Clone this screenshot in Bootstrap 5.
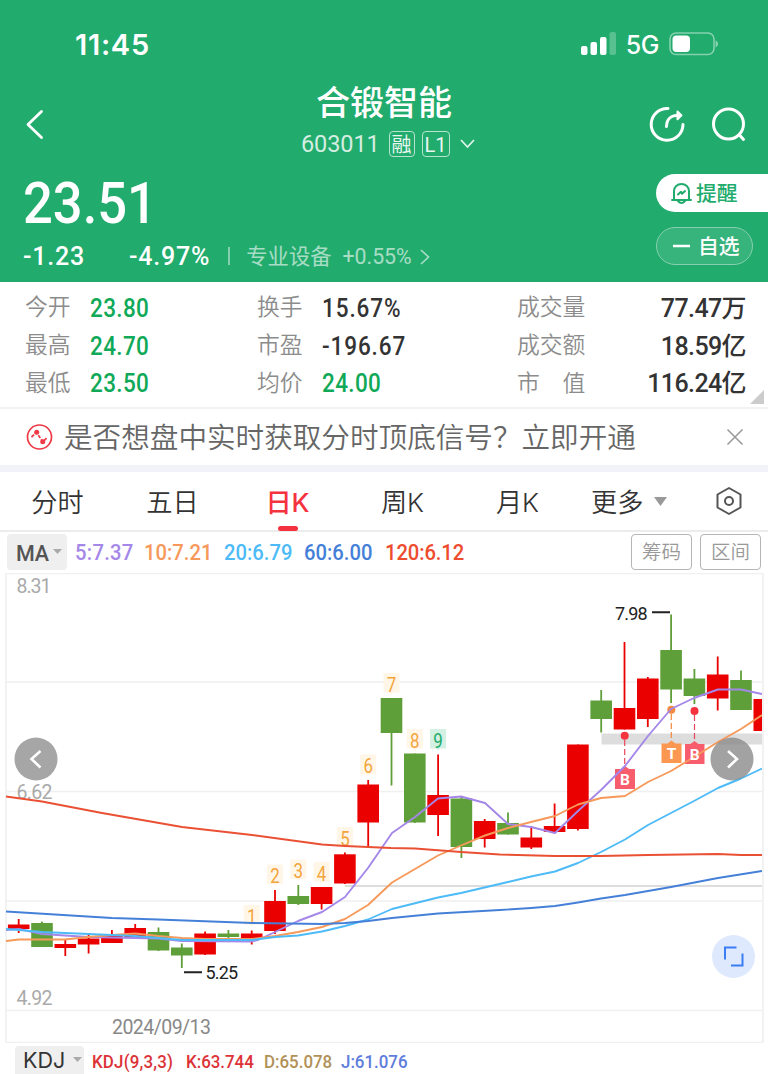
<!DOCTYPE html>
<html lang="zh-CN">
<head>
<meta charset="utf-8">
<meta name="viewport" content="width=device-width, initial-scale=1">
<title>合锻智能 603011</title>
<link rel="stylesheet" href="https://cdn.jsdelivr.net/npm/bootstrap@5.3.0/dist/css/bootstrap.min.css">
<style>
  body { font-family: Roboto, "Noto Sans CJK SC", sans-serif; line-height: 1; background: #fff; color: #333; overflow-x: hidden; white-space: nowrap; }
  svg { display: block; flex: none; }
  .quote-head { background: #21ab6d; color: #fff; height: 282px; }
  .status-bar { height: 88px; padding: 0 49px 0 75px; font-family: Inter, sans-serif; }
  .clock { font-size: 29px; font-weight: 600; letter-spacing: .7px; }
  .net { font-size: 25px; font-weight: 500; letter-spacing: -.5px; margin: 2px 10px 0 9px; }
  .title-row { height: 78px; grid-template-columns: 150px 1fr 150px; }
  .stock-name { font-size: 34px; font-weight: 500; height: 32px; line-height: 30px; }
  .code { font-size: 24.5px; letter-spacing: -.1px; opacity: .8; width: 78px; margin-right: 10px; transform: scaleX(.96); transform-origin: left; }
  .tag-box { border: 1px solid rgba(255,255,255,.75); border-radius: 4px; height: 26px; line-height: 26px; text-align: center; font-size: 20px; opacity: .9; }
  .price { font-size: 58px; font-weight: 500; height: 58px; line-height: 58px; transform: scaleX(.905); transform-origin: left; }
  .chg { font-size: 25px; font-weight: 500; letter-spacing: .8px; }
  .sector { font-size: 21.3px; opacity: .6; }
  .alert-pill { width: 112px; height: 38px; border-radius: 19px 0 0 19px; background: #fff; color: #21ab6d; font-size: 20.8px; font-weight: 500; padding-left: 15px; }
  .fav-pill { width: 97px; height: 38px; border-radius: 19px; background: #37b37c; border: 1px solid #86d0af; font-size: 20.8px; font-weight: 500; padding-left: 16px; }
  .alert-pill span, .fav-pill span { padding-top: 2px; }
  .stats { height: 127px; padding: 6px 22px 0 25px; border-bottom: 2px solid #f2f2f2; position: relative; }
  .stat-line { height: 37.7px; }
  .stat-line .lab { color: #8c8c8c; font-size: 22.8px; font-weight: 350; width: 65px; padding-top: 4px; }
  .stat-line .lab-r { width: 100px; margin-left: auto; }
  .stat-line .val { font-size: 25px; font-weight: 500; letter-spacing: -.6px; padding-top: 3px; }
  .stat-line .din { letter-spacing: .4px; transform: scaleX(.9); transform-origin: left; }
  .stat-line .wide { letter-spacing: 1px; }
  .c1 { width: 167px; }
  .c3 { width: 129px; }
  .up { color: #0fa958; }
  .corner { position: absolute; right: 4px; bottom: 3px; }
  .promo { height: 56px; padding: 0 24px 0 26px; color: #666; font-size: 28.6px; font-weight: 350; }
  .promo span { padding-top: 2px; margin-left: 11px; }
  .strip { height: 7px; background: #f2f3f8; }
  .tabs-row { height: 60px; border-bottom: 2px solid #ececec; font-family: Inter, "Noto Sans CJK SC", sans-serif; font-size: 26.2px; color: #333; font-weight: 350; }
  .tab-item { width: 115px; height: 58px; text-align: center; line-height: 61px; position: relative; }
  .tab-item.on { color: #f5333f; font-weight: 500; }
  .tab-item.on::after { content: ""; position: absolute; left: 48px; bottom: -1px; width: 20px; height: 5px; border-radius: 3px; background: #f5333f; }
  .ma-row { height: 41px; padding: 2px 7px 0 7px; font-size: 21.5px; font-weight: 500; }
  .ma-vals { height: 38px; }
  .ma-vals span { transform: scaleX(.94); transform-origin: left; }
  .sel { background: #efefef; border-radius: 4px; }
  .ma-sel { width: 60px; height: 36px; color: #555; padding-left: 9px; letter-spacing: -.3px; }
  .out-btn { width: 61px; height: 36px; border: 1px solid #b5b5b5; border-radius: 4px; color: #999; font-size: 19.5px; font-weight: 350; padding-top: 1px; }
  .kdj-row { height: 31px; padding: 3px 0 0 15px; font-size: 17.8px; font-weight: 500; overflow: hidden; }
  .kdj-row span { transform: scaleX(.95); transform-origin: left; }
  .kdj-sel { width: 69px; height: 32px; padding: 0 0 5px 8px; font: 400 21.5px Inter, sans-serif; color: #333; }
  .chart text { font-family: Roboto, sans-serif; }
</style>
</head>
<body>
<header class="quote-head">
  <div class="status-bar d-flex align-items-center">
    <span class="clock me-auto">11:45</span>
    <svg width="36" height="24" viewBox="0 0 36 24" fill="#fff"><rect x="0" y="14" width="6.5" height="9" rx="2"/><rect x="9.5" y="10" width="6.5" height="13" rx="2"/><rect x="19" y="5" width="6.5" height="18" rx="2"/><rect x="28.5" y="0" width="6.5" height="23" rx="2" opacity=".25"/></svg>
    <span class="net">5G</span>
    <svg width="50" height="24" viewBox="0 0 50 24"><rect x="1" y="1" width="44" height="21.5" rx="6" fill="none" stroke="#fff" stroke-opacity=".45" stroke-width="1.6"/><rect x="3.5" y="3.5" width="17.5" height="16.5" rx="4" fill="#fff"/><path d="M46.6 8.2q2.4 1 2.4 3.6t-2.4 3.6z" fill="#fff" opacity=".5"/></svg>
  </div>
  <div class="title-row d-grid">
    <svg class="ms-4" width="24" height="72" viewBox="0 0 24 72" fill="none" stroke="#fff" stroke-width="2.8" stroke-linecap="round" stroke-linejoin="round"><path d="M17.5 23.5 4 36.5 17.5 49.5"/></svg>
    <div class="d-flex flex-column align-items-center">
      <div class="stock-name mb-2">合锻智能</div>
      <div class="d-flex align-items-center ps-2" style="height:26px;margin-top:3px">
        <span class="code">603011</span>
        <span class="tag-box" style="width:26px;margin-right:7px">融</span>
        <span class="tag-box" style="width:28px">L1</span>
        <svg class="ms-2" width="18" height="14" viewBox="0 0 18 14" fill="none" stroke="#fff" stroke-width="1.8" stroke-opacity=".85"><path d="m3 3 6.5 7L16 3"/></svg>
      </div>
    </div>
    <svg width="150" height="72" viewBox="618 88 150 72" fill="none" stroke="#fff" stroke-width="3" stroke-linecap="round" stroke-linejoin="round"><path d="M668 108.500A15.900 15.900 0 1 0 683 124.500M666.500 126.500c.2-7.500 3.600-11.200 13-11.200"/><path d="M677.500 111.500l4 3.900-4 3.900z" fill="#fff" stroke-width="2"/><circle cx="728.500" cy="124" r="15"/><path d="m739.500 135 4 4.500"/></svg>
  </div>
  <div class="d-flex justify-content-between">
    <div style="padding:8px 0 0 23px">
      <div class="price">23.51</div>
      <div class="d-flex align-items-center" style="height:49px">
        <span class="chg" style="width:106px">-1.23</span>
        <span class="chg">-4.97%</span>
        <svg class="sector" style="margin:0 16px 0 18px" width="2" height="20"><path d="M1 0v18" stroke="#fff" stroke-width="1.5"/></svg>
        <span class="sector">专业设备</span>
        <span class="sector" style="margin-left:11px">+0.55%</span>
        <svg class="sector" style="margin-left:7px" width="12" height="20" fill="none" stroke="#fff" stroke-width="1.700"><path d="m2 3 7.500 7L2 17"/></svg>
      </div>
    </div>
    <div class="pt-2">
      <div class="alert-pill d-flex align-items-center">
        <svg class="me-1" width="21" height="24" viewBox="0 0 21 24" fill="none" stroke="#21ab6d" stroke-width="2" stroke-linecap="round" stroke-linejoin="round"><path d="M1 19h19M3 19v-9a7.500 7 0 0 1 15 0v9M7 20q3.500 4 7 0M7 13.500l3-2.700 1 2 3-2.700"/></svg>
        <span>提醒</span>
      </div>
      <div class="fav-pill d-flex align-items-center" style="margin-top:15px">
        <svg width="25" height="4"><path d="M0 2h17" stroke="#fff" stroke-width="2.500"/></svg><span>自选</span>
      </div>
    </div>
  </div>
</header>

<section class="stats">
  <div class="d-flex align-items-center stat-line"><span class="lab">今开</span><span class="val din up c1 me-0">23.80</span><span class="lab">换手</span><span class="val din wide">15.67%</span><span class="lab lab-r">成交量</span><span class="val text-end c3">77.47万</span></div>
  <div class="d-flex align-items-center stat-line"><span class="lab">最高</span><span class="val din up c1 me-0">24.70</span><span class="lab">市盈</span><span class="val din wide">-196.67</span><span class="lab lab-r">成交额</span><span class="val text-end c3">18.59亿</span></div>
  <div class="d-flex align-items-center stat-line"><span class="lab">最低</span><span class="val din up c1 me-0">23.50</span><span class="lab">均价</span><span class="val din up">24.00</span><span class="lab lab-r">市　值</span><span class="val text-end c3">116.24亿</span></div>
  <svg class="corner" width="14" height="14"><path d="M14 0v14H0z" fill="#ccc"/></svg>
</section>

<section class="promo d-flex align-items-center">
  <svg width="27" height="27" viewBox="0 0 27 27" fill="none" stroke="#ee3a46" stroke-width="1.700"><circle cx="13.500" cy="13" r="12"/><path d="M5.500 13 10.500 8.500l6.500 9.500 4.500-5" stroke-dasharray="3.500 1.500"/><g fill="#ee3a46" stroke="none"><circle cx="10.700" cy="8.200" r="2.500"/><circle cx="16.700" cy="17.800" r="2.500"/></g></svg>
  <span>是否想盘中实时获取分时顶底信号？立即开通</span>
  <svg class="ms-auto" width="18" height="18" stroke="#999" stroke-width="1.500"><path d="m1.500 1.500 15 15m0-15-15 15"/></svg>
</section>
<div class="strip"></div>

<nav class="tabs-row d-flex align-items-center">
  <div class="tab-item">分时</div><div class="tab-item">五日</div><div class="tab-item on">日K</div><div class="tab-item">周K</div><div class="tab-item">月K</div>
  <span class="ms-3 pt-1">更多</span>
  <svg style="margin-left:11px" width="13" height="9"><path d="M0 0h13L6.500 9z" fill="#999"/></svg>
  <svg style="margin-left:47px" width="30" height="30" viewBox="0 0 30 30" fill="none" stroke="#555" stroke-width="2" stroke-linejoin="round"><path d="M15 2 26.500 8.500v13L15 28 3.500 21.500v-13z"/><circle cx="15" cy="15" r="4"/></svg>
</nav>

<section class="ma-row d-flex">
  <div class="ma-sel sel d-flex align-items-center pt-1">MA<svg class="ms-1 mb-1" width="9" height="6"><path d="M0 0h9L4.500 5z" fill="#aaa"/></svg></div>
  <div class="ma-vals d-flex align-items-center">
    <span style="color:#a487e8;width:69px;margin-left:7.500px;letter-spacing:.3px">5:7.37</span>
    <span style="color:#f6995b;width:80px">10:7.21</span>
    <span style="color:#4dbbf8;width:80px">20:6.79</span>
    <span style="color:#4580d8;width:81px">60:6.00</span>
    <span style="color:#ee4c2f;letter-spacing:-.1px">120:6.12</span>
  </div>
  <div class="out-btn ms-auto me-2 d-flex align-items-center justify-content-center">筹码</div>
  <div class="out-btn d-flex align-items-center justify-content-center">区间</div>
</section>

<svg class="chart" id="chart" width="768" height="470" viewBox="0 573 768 470">
  <defs><clipPath id="plot"><rect x="6" y="573" width="756" height="470"/></clipPath></defs>
  <path d="M6 573.500H762M6 682H762M6 791.500H762M6 901H762M6 1010.500H762M6 1042.500H762" stroke="#f0f0f0" stroke-width="1.500"/>
  <path d="M6 573V1043M763 573V1043" stroke="#f2f2f2" stroke-width="2"/>
  <g fill="#aaa" font-size="19.500"><text x="16.500" y="593" textLength="35">8.31</text><text x="16.500" y="799" textLength="36">6.62</text><text x="16.500" y="1005" textLength="36">4.92</text></g>
  <path d="M345 886H762" stroke="#ddd" stroke-width="2"/><rect x="601.500" y="733.500" width="160.500" height="11" fill="#ddd"/>
  <g id="candles" clip-path="url(#plot)"></g>
  <g id="marks" font-size="19.500" text-anchor="middle"></g>
  <g stroke-dasharray="6 3" stroke-width="1.200" fill="none"><path d="M624.700 740V768M694.500 715V742" stroke="#e8465c"/><path d="M671.300 714V742" stroke="#f5893c"/></g>
  <g><path d="M615 769h6l4-3 4 3h6v20h-20zM685 744h5.500l4-3 4 3h6v20h-19.500z" fill="#f75d6c"/><path d="M661.500 743.500h6l4-3 4 3h6v19.500h-20z" fill="#fb9750"/></g>
  <g fill="#f5333f"><circle cx="624.700" cy="735.800" r="4"/><circle cx="694.500" cy="711" r="4"/><circle cx="671.300" cy="709.800" r="4" fill="#f5893c"/></g>
  <g fill="none" stroke-width="1.900" stroke-linejoin="round" clip-path="url(#plot)">
    <polyline stroke="#a487e8" points="6,930 19,929 42,934 88,937 158,938.500 182,941 251,941.500 258,940 275,932 298,921 322,912 345,897 368,868 392,833 415,817 438,798.500 461,796.500 485,803 508,824 531,827 555,833 578,811 601,790 625,766 648,736 671,709 694,698 718,689.500 741,689.500 762,694"/>
    <polyline stroke="#f6995b" points="6,941 19,939.500 65,939.500 88,937 112,935 135,933.500 158,936 182,938 205,939 252,939 275,936 298,932 322,927 345,919 368,905 392,882.500 415,869 438,855.500 461,845.500 485,835.500 508,828 531,822 555,816 578,804.500 601,798 625,796 648,782 671,771 694,757 718,742 741,729 762,715"/>
    <polyline stroke="#4dbbf8" points="6,929 19,930 42,932 112,935 135,936 182,940 252,940 275,937 298,935.500 322,931.500 345,926 368,919.500 392,909 438,897.500 461,893 508,882 531,876.500 555,871.500 578,863 601,852 625,839.500 648,825 671,813 694,801 718,788 741,778.500 762,768.500"/>
    <polyline stroke="#4580d8" points="6,911.500 112,918 158,919.500 252,923 322,924 345,923 368,921 392,918 438,913.500 500,910 531,908 555,906 578,902.500 601,898.500 625,895 648,891 671,887 718,878 762,871"/>
    <polyline stroke="#ea5034" points="6,796.500 42,801.500 102,813 182,827 252,835 322,844.500 345,846 391,848 415,848.500 461,852 500,854.500 555,856 601,856 648,855 718,854 741,855 762,855"/>
  </g>
  <g fill="#fff" font-size="15.500" font-weight="700" text-anchor="middle"><text x="625" y="785">B</text><text x="694.800" y="760">B</text><text x="671.500" y="759">T</text></g>
  <g fill="#222" font-size="18"><path d="M652 612.300H670M184 972.300H202" stroke="#222" stroke-width="2"/><text x="615" y="619.500" textLength="32.500">7.98</text><text x="205.500" y="979" textLength="32.500">5.25</text></g>
  <text x="112" y="1034" fill="#888" font-size="19.500" textLength="99">2024/09/13</text>
  <circle cx="36" cy="759" r="21.500" fill="#a6a6a6"/><circle cx="732" cy="759" r="21.500" fill="#888" fill-opacity=".78"/>
  <path d="m40.500 751-9 8 9 8.500M728 751l9 8-9 8.500" fill="none" stroke="#fff" stroke-width="2.600"/>
  <circle cx="733.500" cy="956.500" r="21.500" fill="#dfe9fd"/><path d="M736.500 947.500H725v12M742.500 953.500v12H731" fill="none" stroke="#3b7df5" stroke-width="2"/>
</svg>

<section class="kdj-row d-flex">
  <div class="kdj-sel sel d-flex align-items-center">KDJ<svg class="ms-2" width="9" height="6"><path d="M0 0h9L4.500 5z" fill="#aaa"/></svg></div>
  <div class="d-flex" style="padding-top:7px">
    <span style="color:#dc3338;margin-left:8px;width:94px;letter-spacing:.2px">KDJ(9,3,3)</span>
    <span style="color:#dc3338;width:78px">K:63.744</span>
    <span style="color:#b29158;width:77px">D:65.078</span>
    <span style="color:#5f7ddc">J:61.076</span>
  </div>
</section>

<script src="https://cdn.jsdelivr.net/npm/bootstrap@5.3.0/dist/js/bootstrap.bundle.min.js"></script>
<script>
  // Daily candles: [up?, body top, body bottom, wick top, wick bottom]
  const candles = [
    [1,924.5,929,919,933],[0,923,947,921.5,947],[1,944,948,940,956],[1,938.5,944.5,934,953.5],[1,935,943,930,943],
    [1,928,938,924,938],[0,932,950.5,927.5,951],[0,947.5,955.5,943.5,968],[1,933.5,954.5,931.5,955],[0,933.5,937,930,939],
    [1,933.5,939,930.5,944.5],[1,901,931,890,934],[0,896,904,885,905],[1,887,904,887,909.5],[1,854.3,883.5,852.5,884],
    [1,784.5,822.5,780,847],[0,698,733,698,785.5],[0,753.5,822.5,753.5,823],[1,795,815,754.5,836],[0,798.5,847,796.5,858],
    [1,821,839,819,847.5],[0,823,834.5,812.5,834.5],[1,837.5,847.5,826,849],[1,826,832,803.5,832],[1,744.5,829,744.5,830.5],
    [0,700.5,719,690,732.5],[1,708,729.5,642,729.5],[1,678.5,719,677,727],[0,650,689.5,614.5,703],[0,678.5,696,669,704],
    [1,674.5,698.5,656.5,710.5],[0,680,710,670.5,710],[1,699,731,699,731]
  ];
  const cx = k => 18.7 + 23.3 * k;
  document.getElementById('candles').innerHTML = candles.map(([up, t, b, wt, wb], k) => {
    const c = up ? '#eb0000' : '#5f9f3a';
    return `<rect x="${cx(k) - 10.8}" y="${t}" width="21.6" height="${b - t}" fill="${c}"/><rect x="${cx(k) - .9}" y="${wt}" width="1.8" height="${wb - wt}" fill="${c}"/>`;
  }).join('');
  // Sequence numbers 1-9 above the candles, given by their box tops
  const tops = [905, 864.5, 859.5, 862, 827, 754.5, 673, 729, 729];
  document.getElementById('marks').innerHTML = tops.map((y, i) => {
    const x = cx(i + 10), last = i === 8;
    return `<path d="M${x - 8} ${y}h16v19.500h-6l-2 2-2-2h-6z" fill="${last ? '#d3f0e2' : '#fff6e8'}"/><text x="${x}" y="${y + 18.5}" textLength="9.5" lengthAdjust="spacingAndGlyphs" fill="${last ? '#21ab6d' : '#f3a43a'}">${i + 1}</text>`;
  }).join('');
</script>
</body>
</html>
